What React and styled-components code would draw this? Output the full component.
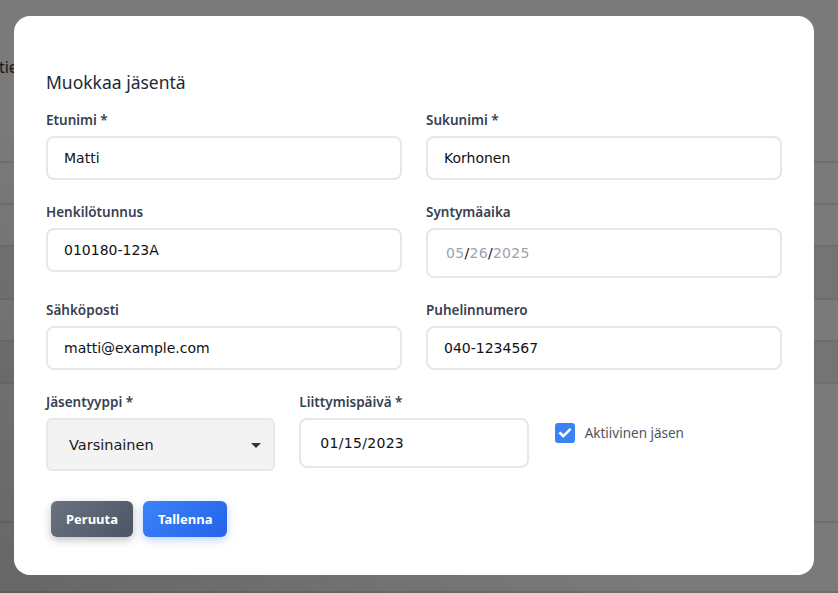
import styled, { createGlobalStyle } from "styled-components";

const GlobalStyle = createGlobalStyle`
  * { box-sizing: border-box; }
  html, body { margin: 0; padding: 0; }
  body {
    width: 838px;
    height: 593px;
    overflow: hidden;
    font-family: "Noto Sans", "DejaVu Sans", sans-serif;
    background: #f4f4f5;
  }
`;

const BG_ROWS = [42, 42, 53, 42, 42, 139, 70];

const Page = () => (
  <PageWrap>
    <PageHeader>
      <PageTitle>Jäsentiedot</PageTitle>
    </PageHeader>
    <BgTable>
      {BG_ROWS.map((h, i) => (
        <BgRow key={i} $h={h} $dark={i === 2 || i === 4} />
      ))}
    </BgTable>
  </PageWrap>
);

const App = () => {
  return (
    <>
      <GlobalStyle />
      <Page />
      <Overlay>
        <Dialog>
          <Title>Muokkaa jäsentä</Title>

          <Grid $cols={2}>
            <Field>
              <Label>Etunimi *</Label>
              <Input defaultValue="Matti" />
            </Field>
            <Field>
              <Label>Sukunimi *</Label>
              <Input defaultValue="Korhonen" />
            </Field>
            <Field>
              <Label>Henkilötunnus</Label>
              <Input defaultValue="010180-123A" />
            </Field>
            <Field>
              <Label>Syntymäaika</Label>
              <DateBox $pad={18}>
                <Seg $muted>05</Seg>/<Seg $muted>26</Seg>/<Seg $muted>2025</Seg>
              </DateBox>
            </Field>
            <Field>
              <Label>Sähköposti</Label>
              <Input defaultValue="matti@example.com" />
            </Field>
            <Field>
              <Label>Puhelinnumero</Label>
              <Input defaultValue="040-1234567" />
            </Field>
          </Grid>

          <Grid $cols={3}>
            <Field>
              <Label>Jäsentyyppi *</Label>
              <Select>
                <span>Varsinainen</span>
                <Caret />
              </Select>
            </Field>
            <Field>
              <Label>Liittymispäivä *</Label>
              <DateBox $pad={19}>
                <Seg>01</Seg>/<Seg>15</Seg>/<Seg>2023</Seg>
              </DateBox>
            </Field>
            <CheckField>
              <CheckBox>
                <svg width="14" height="14" viewBox="0 0 24 24" fill="none">
                  <path
                    d="M4 12.5l5 5L20 6.5"
                    stroke="#fff"
                    strokeWidth="4.5"
                    strokeLinecap="square"
                  />
                </svg>
              </CheckBox>
              <CheckLabel>Aktiivinen jäsen</CheckLabel>
            </CheckField>
          </Grid>

          <Actions>
            <Button $variant="gray">Peruuta</Button>
            <Button $variant="blue">Tallenna</Button>
          </Actions>
        </Dialog>
      </Overlay>
    </>
  );
};

const PageWrap = styled.div`
  width: 838px;
  height: 593px;
  background: #f4f4f5;
`;

const PageHeader = styled.div`
  height: 163px;
  padding: 56px 0 0 0;
  border-bottom: 2px solid #dcdcdc;
`;

const PageTitle = styled.div`
  margin-left: -41px;
  font-size: 16px;
  color: #333;
`;

const BgTable = styled.div`
  display: flex;
  flex-direction: column;
`;

const BgRow = styled.div`
  height: ${({ $h }) => $h}px;
  border-bottom: 2px solid #dcdcdc;
  background: ${({ $dark }) => ($dark ? "#e9e9e9" : "#f4f4f5")};
`;

const Overlay = styled.div`
  position: fixed;
  inset: 0;
  background: linear-gradient(
    to top right,
    rgba(0, 0, 0, 0.58),
    rgba(0, 0, 0, 0.5) 40%,
    rgba(0, 0, 0, 0.5)
  );
  padding: 16px 24px 18px 14px;
`;

const Dialog = styled.div`
  width: 800px;
  height: 559px;
  background: #fff;
  border-radius: 16px;
  padding: 53px 32px 32px;
  display: flex;
  flex-direction: column;
`;

const Title = styled.h2`
  margin: 0 0 17px;
  font-size: 17.5px;
  font-weight: 400;
  line-height: 26px;
  color: #1f2937;
`;

const Grid = styled.div`
  display: grid;
  grid-template-columns: repeat(${({ $cols }) => $cols}, 1fr);
  column-gap: 24px;
  row-gap: 24px;
  & + & {
    margin-top: 24px;
  }
`;

const Field = styled.div`
  display: flex;
  flex-direction: column;
`;

const Label = styled.label`
  font-size: 13.5px;
  font-weight: 600;
  line-height: 16px;
  color: #374151;
  margin-bottom: 8px;
`;

const Input = styled.input`
  height: 44px;
  border: 2px solid #e5e7eb;
  border-radius: 8px;
  padding: 0 16px;
  font-family: "DejaVu Sans", sans-serif;
  font-size: 14px;
  color: #111;
  background: #fff;
  outline: none;
`;

const DateBox = styled.div`
  height: 50px;
  border: 2px solid #e5e7eb;
  border-radius: 8px;
  padding: 0 ${({ $pad }) => $pad}px;
  display: flex;
  align-items: center;
  font-family: "DejaVu Sans", sans-serif;
  font-size: 14px;
  color: #111;
  letter-spacing: 0.3px;
`;

const Seg = styled.span`
  color: ${({ $muted }) => ($muted ? "#9ca3af" : "#111")};
`;

const Select = styled.div`
  height: 53px;
  border: 2px solid #e5e7eb;
  border-radius: 6px;
  background: #f3f3f3;
  padding: 0 12px 0 21px;
  display: flex;
  align-items: center;
  justify-content: space-between;
  font-family: "DejaVu Sans", sans-serif;
  font-size: 14.5px;
  color: #1a1a1a;
`;

const Caret = styled.span`
  width: 0;
  height: 0;
  border-left: 5px solid transparent;
  border-right: 5px solid transparent;
  border-top: 5px solid #333;
  margin-top: 2px;
`;

const CheckField = styled.div`
  display: flex;
  align-items: center;
  gap: 10px;
  padding-top: 29px;
  padding-left: 2px;
  align-self: start;
`;

const CheckBox = styled.span`
  width: 20px;
  height: 20px;
  border-radius: 3px;
  background: #3b82f6;
  display: flex;
  align-items: center;
  justify-content: center;
`;

const CheckLabel = styled.span`
  font-size: 13.5px;
  color: #4b5563;
`;

const Actions = styled.div`
  display: flex;
  gap: 10px;
  margin-top: 30px;
  padding-left: 5px;
`;

const Button = styled.button`
  height: 36px;
  padding: 0 15px;
  border: none;
  border-radius: 6px;
  font-family: "Noto Sans", sans-serif;
  font-size: 13px;
  font-weight: 700;
  color: #fff;
  background: ${({ $variant }) =>
    $variant === "blue"
      ? "linear-gradient(135deg, #3b82f6, #2563eb)"
      : "linear-gradient(135deg, #6b7280, #4b5563)"};
  box-shadow: ${({ $variant }) =>
    $variant === "blue"
      ? "0 3px 8px rgba(59, 130, 246, 0.35)"
      : "0 3px 8px rgba(0, 0, 0, 0.25)"};
`;

export default App;
